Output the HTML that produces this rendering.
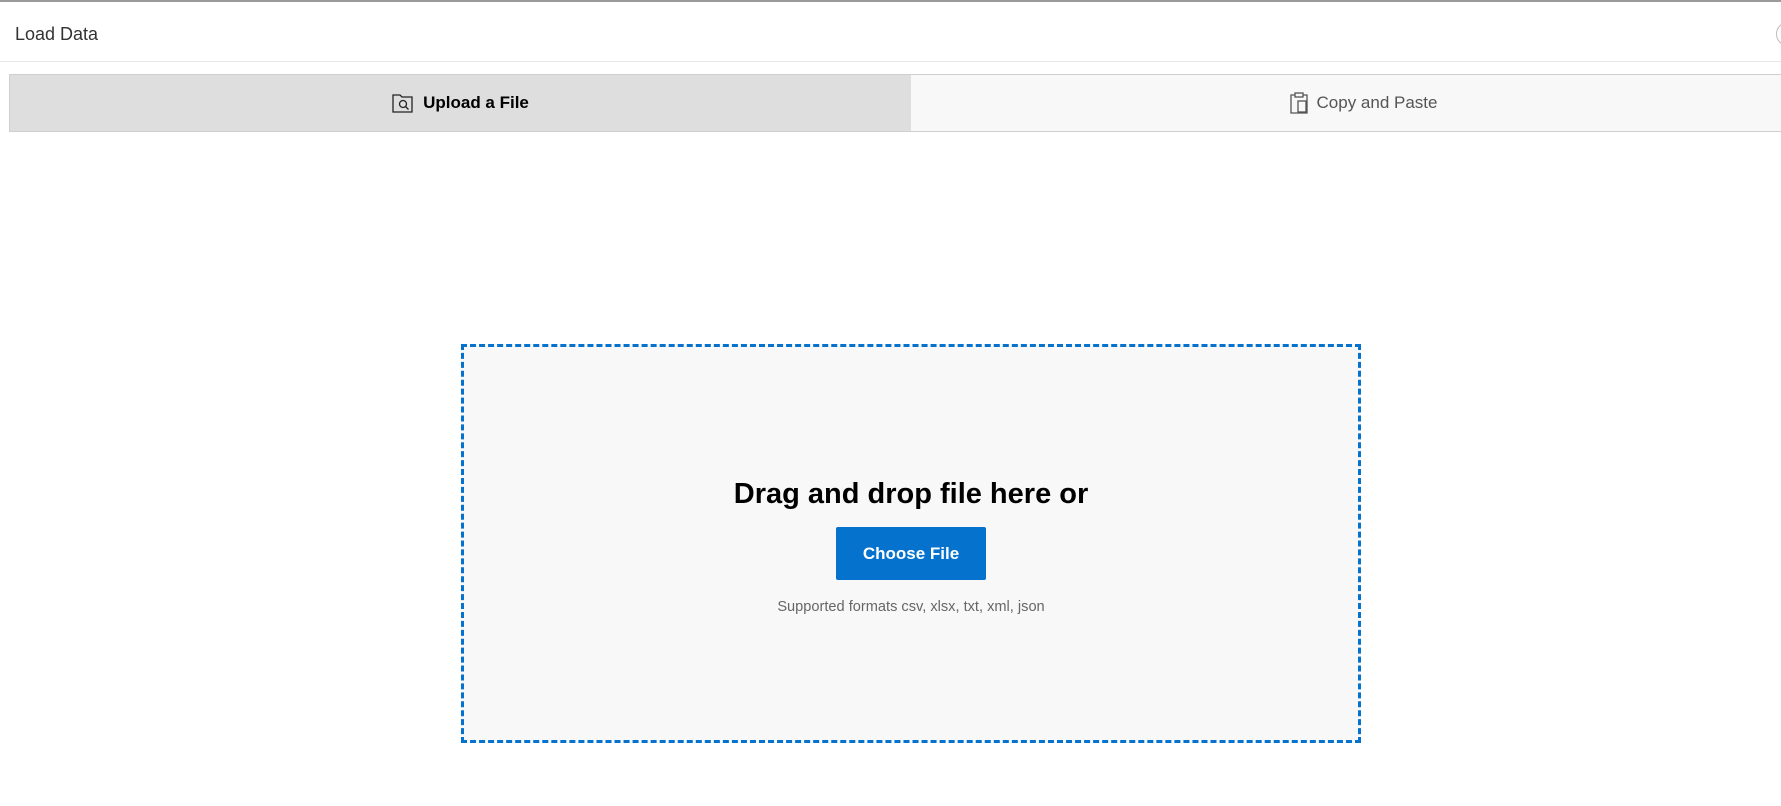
<!DOCTYPE html>
<html><head><meta charset="utf-8"><style>
*{margin:0;padding:0;box-sizing:border-box}
body{width:1781px;height:806px;background:#fff;font-family:"Liberation Sans",sans-serif;position:relative;overflow:hidden}
.top{position:absolute;left:0;top:0;width:1781px;height:2px;background:#9a9a9a}
.title{position:absolute;left:15px;top:24px;font-size:18px;color:#333}
.sep{position:absolute;left:0;top:61px;width:1781px;height:1px;background:#e8e8e8}
.close{position:absolute;left:1776px;top:22px;width:24px;height:24px;border:1px solid #bbb;border-radius:50%}
.tab{position:absolute;top:74px;height:58px;border:1px solid #cfcfcf;display:flex;align-items:center;justify-content:center;font-size:17px}
.t1{left:9px;width:903px;background:#dedede;color:#000;font-weight:bold}
.t2{left:911px;width:880px;background:#f8f8f8;color:#555;border-left:none;padding-left:26px}
.tab svg{margin-right:9px}
.drop{position:absolute;left:461px;top:344px;width:900px;height:399px;background:#f8f8f8;border:3px dashed #0572ce}
h1{position:absolute;left:0;width:100%;top:131px;text-align:center;font-size:29px;font-weight:bold;color:#000}
.btn{position:absolute;left:372px;top:180px;width:150px;height:53px;background:#0572ce;border-radius:2px;color:#fff;font-size:17px;font-weight:bold;display:flex;align-items:center;justify-content:center}
.sup{position:absolute;left:0;width:100%;top:252px;text-align:center;font-size:14.6px;color:#666}
</style></head><body>
<div class="top"></div>
<div class="title">Load Data</div>
<div class="close"></div>
<div class="sep"></div>
<div class="tab t1"><svg width="22" height="20" viewBox="0 0 22 20" fill="none" stroke="#222" stroke-width="1.3"><path d="M1 2h7l2 2h10v15H1z"/><circle cx="11" cy="11" r="3.5"/><path d="M13.5 13.5l3 3"/></svg>Upload a File</div>
<div class="tab t2"><svg width="18" height="22" viewBox="0 0 18 22" fill="none" stroke="#555" stroke-width="1.3"><path d="M5 3H1v18h16V3h-4"/><rect x="5" y="1" width="8" height="4"/><rect x="8" y="9" width="8" height="11"/></svg>Copy and Paste</div>
<div class="drop">
<h1>Drag and drop file here or</h1>
<div class="btn">Choose File</div>
<div class="sup">Supported formats csv, xlsx, txt, xml, json</div>
</div>
</body></html>
